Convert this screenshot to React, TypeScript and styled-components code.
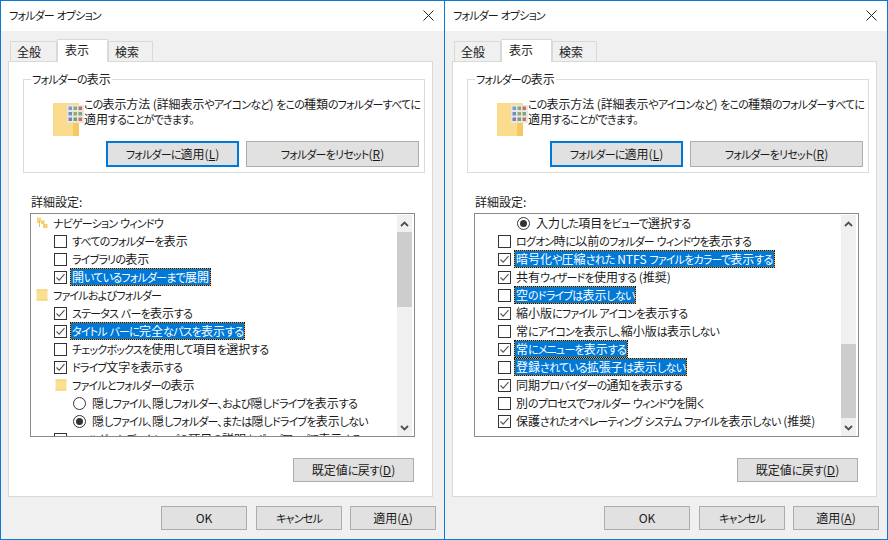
import React from "react";
import styled, { createGlobalStyle } from "styled-components";

type RowKind = "nav" | "folder" | "check" | "radio";

interface IRow {
    kind: RowKind;
    label: string;
    on?: boolean;
    sel?: boolean;
    sub?: boolean;
}

const leftRows: IRow[] = [
    { kind: "nav", label: "ナビゲーション ウィンドウ" },
    { kind: "check", label: "すべてのフォルダーを表示" },
    { kind: "check", label: "ライブラリの表示" },
    { kind: "check", label: "開いているフォルダーまで展開", on: true, sel: true },
    { kind: "folder", label: "ファイルおよびフォルダー" },
    { kind: "check", label: "ステータス バーを表示する", on: true },
    { kind: "check", label: "タイトル バーに完全なパスを表示する", on: true, sel: true },
    { kind: "check", label: "チェックボックスを使用して項目を選択する" },
    { kind: "check", label: "ドライブ文字を表示する", on: true },
    { kind: "folder", label: "ファイルとフォルダーの表示", sub: true },
    { kind: "radio", label: "隠しファイル、隠しフォルダー、および隠しドライブを表示する" },
    { kind: "radio", label: "隠しファイル、隠しフォルダー、または隠しドライブを表示しない", on: true },
    { kind: "check", label: "フォルダーとデスクトップの項目の説明をポップアップで表示する", on: false },
];

const rightRows: IRow[] = [
    { kind: "radio", label: "入力した項目をビューで選択する", on: true },
    { kind: "check", label: "ログオン時に以前のフォルダー ウィンドウを表示する" },
    { kind: "check", label: "暗号化や圧縮された NTFS ファイルをカラーで表示する", on: true, sel: true },
    { kind: "check", label: "共有ウィザードを使用する (推奨)", on: true },
    { kind: "check", label: "空のドライブは表示しない", sel: true },
    { kind: "check", label: "縮小版にファイル アイコンを表示する", on: true },
    { kind: "check", label: "常にアイコンを表示し、縮小版は表示しない" },
    { kind: "check", label: "常にメニューを表示する", on: true, sel: true },
    { kind: "check", label: "登録されている拡張子は表示しない", sel: true },
    { kind: "check", label: "同期プロバイダーの通知を表示する", on: true },
    { kind: "check", label: "別のプロセスでフォルダー ウィンドウを開く" },
    { kind: "check", label: "保護されたオペレーティング システム ファイルを表示しない (推奨)", on: true },
];

const Global = createGlobalStyle`
    html, body { margin: 0; padding: 0; background: #f0f0f0; }
    * { box-sizing: border-box; }
    body {
        font-family: "Noto Sans CJK JP", "Noto Sans", sans-serif;
        font-size: 12px;
        font-feature-settings: "palt";
        color: #1a1a1a;
    }
`;

const Desktop = styled.div`
    display: flex;
    width: 888px;
    height: 540px;
    overflow: hidden;
`;

const Win = styled.div<{ $first?: boolean }>`
    width: ${(p) => (p.$first ? "445px" : "443px")};
    height: 540px;
    display: flex;
    flex-direction: column;
    background: #f0f0f0;
    border-top: 1px solid #0a7ad8;
    border-bottom: 1px solid #0a7ad8;
    border-right: 1px solid #0a7ad8;
    border-left: ${(p) => (p.$first ? "1px solid #0a7ad8" : "none")};
`;

const TitleBar = styled.div`
    height: 30px;
    flex: none;
    background: #fff;
    display: flex;
    align-items: center;
    justify-content: space-between;
    padding: 0 10px 2px 8px;
`;

const Title = styled.span`
    line-height: 16px;
    letter-spacing: -0.1px;
`;

const Tabs = styled.div`
    display: flex;
    align-items: flex-end;
    height: 31px;
    margin-bottom: -1px;
    padding-left: 9px;
    position: relative;
    z-index: 1;
`;

const Tab = styled.div<{ $active?: boolean; $w: number }>`
    width: ${(p) => p.$w}px;
    height: ${(p) => (p.$active ? 23 : 21)}px;
    background: ${(p) => (p.$active ? "#fff" : "#f0f0f0")};
    border: 1px solid #d9d9d9;
    border-bottom: ${(p) => (p.$active ? "none" : "1px solid #d9d9d9")};
    padding-left: ${(p) => (p.$active ? 7 : 6)}px;
    line-height: 19px;
    font-size: 12px;
`;

const Panel = styled.div`
    width: 425px;
    height: 436px;
    margin-left: 7px;
    background: #fff;
    border: 1px solid #d9d9d9;
    padding: 17px 0 0 14px;
`;

const Group = styled.div`
    position: relative;
    width: 402px;
    height: 94px;
    border: 1px solid #dcdcdc;
    padding: 18px 0 0 29px;
`;

const Legend = styled.span`
    position: absolute;
    left: 7px;
    top: -9px;
    padding: 0 1px;
    background: #fff;
    line-height: 16px;
    letter-spacing: -0.1px;
`;

const DescRow = styled.div`
    display: flex;
    height: 38px;
`;

const FolderArt = styled.svg`
    flex: none;
    margin-top: 5px;
`;

const Desc = styled.div`
    line-height: 14.5px;
    margin-top: -1px;
    letter-spacing: -0.1px;
    white-space: nowrap;
`;

const GroupButtons = styled.div`
    display: flex;
    gap: 7px;
    margin: 5px 0 0 53px;
`;

const Btn = styled.button<{ $w: number; $h?: number; $main?: boolean }>`
    width: ${(p) => p.$w}px;
    height: ${(p) => p.$h || 26}px;
    padding: 0;
    background: #e1e1e1;
    border: ${(p) => (p.$main ? "2px solid #0078d7" : "1px solid #adadad")};
    font: inherit;
    font-feature-settings: "palt";
    color: #1a1a1a;
    line-height: 16px;
`;

const Detail = styled.div`
    margin: 21px 0 3px 8px;
    line-height: 16px;
`;

const List = styled.div`
    display: flex;
    justify-content: space-between;
    width: 385px;
    height: 224px;
    margin-left: 7px;
    border: 1px solid #8a8a8a;
    background: #fff;
`;

const Rows = styled.div`
    flex: 1;
    min-width: 0;
    height: 222px;
    overflow: hidden;
`;

const Row = styled.div<{ $pad: number }>`
    display: flex;
    align-items: center;
    height: 18px;
    padding-left: ${(p) => p.$pad}px;
    white-space: nowrap;
`;

const Mark = styled.svg`
    flex: none;
    display: block;
`;

const Box = styled.span`
    flex: none;
    display: block;
    width: 13px;
    height: 13px;
    border: 1px solid #333;
    background: #fff;
`;

const Label = styled.span<{ $sel?: boolean; $gap: number }>`
    margin-left: ${(p) => p.$gap}px;
    padding: 0 1px;
    height: 18px;
    line-height: 15px;
    color: ${(p) => (p.$sel ? "#fff" : "inherit")};
    border: 1px dotted ${(p) => (p.$sel ? "#1c1408" : "transparent")};
    background: ${(p) =>
        p.$sel ? "linear-gradient(#0078d7, #0078d7) padding-box, linear-gradient(#f09a28, #f09a28) border-box" : "transparent"};
`;

const Scroll = styled.div`
    flex: none;
    width: 15px;
    height: 221px;
    margin: 1px 2px 0 0;
    background: #f0f0f0;
    display: flex;
    flex-direction: column;
    justify-content: space-between;
`;

const Arrow = styled.div`
    height: 17px;
    display: flex;
    align-items: center;
    justify-content: center;
`;

const Track = styled.div`
    flex: 1;
`;

const Thumb = styled.div<{ $top: number; $h: number }>`
    margin-top: ${(p) => p.$top}px;
    height: ${(p) => p.$h}px;
    background: #cdcdcd;
`;

const ResetRow = styled.div`
    display: flex;
    justify-content: flex-end;
    width: 391px;
    margin-top: 21px;
`;

const Footer = styled.div`
    display: flex;
    justify-content: flex-end;
    gap: 8px;
    padding: 9px 8px 0 0;
`;

const OkBtn = styled(Btn)`
    margin-right: 1px;
`;

const Under = styled.span`
    text-decoration: underline;
    text-underline-offset: 1px;
`;

// Meiryo UI has narrow kana next to full size kanji, so kana runs get tightened
const Kana = styled.span`
    font-size: 11px;
    line-height: 1;
    letter-spacing: -0.8px;
`;

function Jp({ t }: { t: string }) {
    const parts = t.split(/([\u3040-\u30ff、。]+)/);
    return (
        <>
            {parts.map((s, i) => (i % 2 === 1 ? <Kana key={i}>{s}</Kana> : s))}
        </>
    );
}

function CloseIcon() {
    return (
        <svg width="11" height="11" viewBox="0 0 11 11">
            <path d="M0.5 0.5L10.5 10.5M10.5 0.5L0.5 10.5" stroke="#222" strokeWidth="1" fill="none" />
        </svg>
    );
}

function BigFolder() {
    const colors = ["#7a9ad0", "#8aa86a", "#d06a5a", "#6f8fc0", "#9aa86a", "#7aa87a", "#8a7ab0", "#70a070", "#d0705a"];
    return (
        <FolderArt width="31" height="33" viewBox="0 0 31 33">
            <rect x="0" y="0" width="26" height="33" fill="#fbdc8e" />
            <rect x="20" y="2" width="6" height="31" fill="#f5c862" />
            <rect x="14" y="2" width="17" height="18" fill="#e6e6e6" />
            {colors.map((c, i) => (
                <rect key={i} x={15.5 + (i % 3) * 5} y={3.5 + Math.floor(i / 3) * 5.5} width="3.5" height="3.5" fill={c} />
            ))}
        </FolderArt>
    );
}

function SmallFolder({ nav }: { nav?: boolean }) {
    if (nav) {
        return (
            <Mark width="12" height="12" viewBox="0 0 12 12">
                <path d="M1 0.5H5V5H3V6H1Z" fill="#f8d676" />
                <rect x="3" y="4" width="1" height="6" fill="#c9c09a" />
                <rect x="5" y="3.5" width="3.5" height="3.5" fill="#f6cf66" />
                <rect x="7" y="7" width="4.5" height="4" fill="#f6cf66" />
            </Mark>
        );
    }
    return (
        <Mark width="12" height="12" viewBox="0 0 12 12">
            <rect x="0.5" y="0.5" width="11" height="11" fill="#fbdf93" />
            <rect x="0.5" y="0.5" width="11" height="1" fill="#f3cd6c" />
            <rect x="0.5" y="10.5" width="11" height="1" fill="#f3cd6c" />
        </Mark>
    );
}

function Check({ on }: { on?: boolean }) {
    return (
        <Box>
            {on && (
                <Mark width="11" height="11" viewBox="0 0 11 11">
                    <path d="M1.5 5.5L4.2 8.2L9.5 2.2" stroke="#555" strokeWidth="1.1" fill="none" />
                </Mark>
            )}
        </Box>
    );
}

function Radio({ on }: { on?: boolean }) {
    return (
        <Mark width="13" height="13" viewBox="0 0 13 13">
            <circle cx="6.5" cy="6.5" r="6" fill="#fff" stroke="#333" strokeWidth="1" />
            {on && <circle cx="6.5" cy="6.5" r="3.5" fill="#333" />}
        </Mark>
    );
}

function ListRow({ row }: { row: IRow }) {
    const text = <Jp t={row.label} />;
    if (row.kind === "nav") {
        return (
            <Row $pad={5}>
                <SmallFolder nav />
                <Label $gap={3}>{text}</Label>
            </Row>
        );
    }
    if (row.kind === "folder") {
        return (
            <Row $pad={row.sub ? 24 : 5}>
                <SmallFolder />
                <Label $gap={3}>{text}</Label>
            </Row>
        );
    }
    if (row.kind === "radio") {
        return (
            <Row $pad={42}>
                <Radio on={row.on} />
                <Label $gap={4}>{text}</Label>
            </Row>
        );
    }
    return (
        <Row $pad={23}>
            <Check on={row.on} />
            <Label $gap={3} $sel={row.sel}>{text}</Label>
        </Row>
    );
}

function Chevron({ down }: { down?: boolean }) {
    return (
        <svg width="9" height="6" viewBox="0 0 9 6">
            <path d={down ? "M1 1L4.5 4.5L8 1" : "M1 5L4.5 1.5L8 5"} stroke="#505050" strokeWidth="1.8" fill="none" />
        </svg>
    );
}

function FolderOptions(props: { rows: IRow[]; thumbTop: number; thumbH: number; first?: boolean }) {
    return (
        <Win $first={props.first}>
            <TitleBar>
                <Title><Jp t="フォルダー オプション" /></Title>
                <CloseIcon />
            </TitleBar>
            <Tabs>
                <Tab $w={47}>全般</Tab>
                <Tab $w={51} $active>表示</Tab>
                <Tab $w={45}>検索</Tab>
            </Tabs>
            <Panel>
                <Group>
                    <Legend><Jp t="フォルダーの表示" /></Legend>
                    <DescRow>
                        <BigFolder />
                        <Desc>
                            <Jp t="この表示方法 (詳細表示やアイコンなど) をこの種類のフォルダーすべてに" />
                            <br />
                            <Jp t="適用することができます。" />
                        </Desc>
                    </DescRow>
                    <GroupButtons>
                        <Btn $w={133} $main><Jp t="フォルダーに適用" />(<Under>L</Under>)</Btn>
                        <Btn $w={173}><Jp t="フォルダーをリセット" />(<Under>R</Under>)</Btn>
                    </GroupButtons>
                </Group>
                <Detail>詳細設定:</Detail>
                <List>
                    <Rows>
                        {props.rows.map((r, i) => (
                            <ListRow key={i} row={r} />
                        ))}
                    </Rows>
                    <Scroll>
                        <Arrow><Chevron /></Arrow>
                        <Track>
                            <Thumb $top={props.thumbTop} $h={props.thumbH} />
                        </Track>
                        <Arrow><Chevron down /></Arrow>
                    </Scroll>
                </List>
                <ResetRow>
                    <Btn $w={121} $h={24}><Jp t="既定値に戻す" />(<Under>D</Under>)</Btn>
                </ResetRow>
            </Panel>
            <Footer>
                <OkBtn $w={86} $h={24}>OK</OkBtn>
                <Btn $w={86} $h={24}><Jp t="キャンセル" /></Btn>
                <Btn $w={86} $h={24}>適用(<Under>A</Under>)</Btn>
            </Footer>
        </Win>
    );
}

export default function App() {
    return (
        <Desktop>
            <Global />
            <FolderOptions first rows={leftRows} thumbTop={0} thumbH={75} />
            <FolderOptions rows={rightRows} thumbTop={112} thumbH={74} />
        </Desktop>
    );
}
